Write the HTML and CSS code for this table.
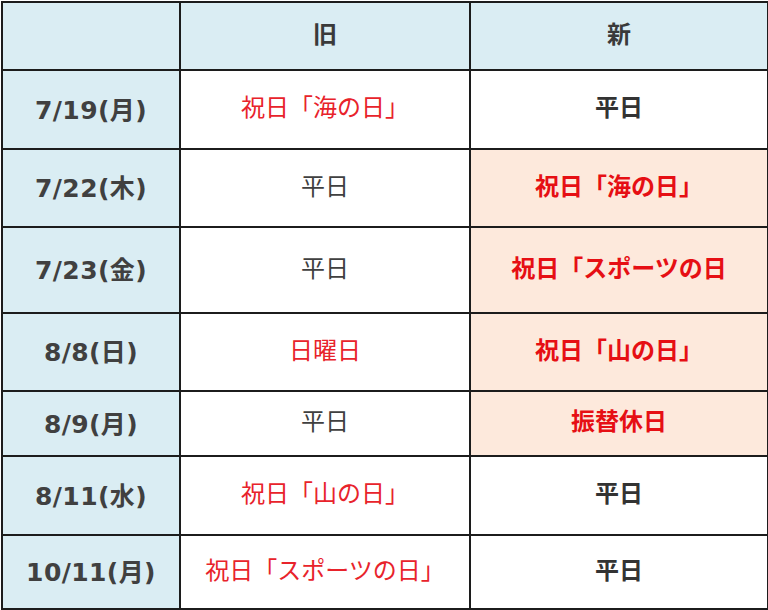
FILE: index.html
```html
<!DOCTYPE html>
<html lang="ja">
<head>
<meta charset="utf-8">
<title>祝日移動</title>
<link rel="stylesheet" href="styles.css">
</head>
<body>
<table class="holidays">
  <colgroup>
    <col class="c-date">
    <col class="c-old">
    <col class="c-new">
  </colgroup>
  <thead>
    <tr class="r-head">
      <th class="date"></th>
      <th class="head">旧</th>
      <th class="head">新</th>
    </tr>
  </thead>
  <tbody>
    <tr class="r1">
      <th class="date">7/19(月)</th>
      <td class="old red">祝日「海の日」</td>
      <td class="new">平日</td>
    </tr>
    <tr class="r2">
      <th class="date">7/22(木)</th>
      <td class="old">平日</td>
      <td class="new changed">祝日「海の日」</td>
    </tr>
    <tr class="r3">
      <th class="date">7/23(金)</th>
      <td class="old">平日</td>
      <td class="new changed">祝日「スポーツの日</td>
    </tr>
    <tr class="r4">
      <th class="date">8/8(日)</th>
      <td class="old red">日曜日</td>
      <td class="new changed">祝日「山の日」</td>
    </tr>
    <tr class="r5">
      <th class="date">8/9(月)</th>
      <td class="old">平日</td>
      <td class="new changed">振替休日</td>
    </tr>
    <tr class="r6">
      <th class="date">8/11(水)</th>
      <td class="old red">祝日「山の日」</td>
      <td class="new">平日</td>
    </tr>
    <tr class="r7">
      <th class="date">10/11(月)</th>
      <td class="old red">祝日「スポーツの日」</td>
      <td class="new">平日</td>
    </tr>
  </tbody>
</table>
</body>
</html>
```

FILE: styles.css
```css
html, body {
  margin: 0;
  padding: 0;
  background: #ffffff;
}

body {
  font-family: "DejaVu Sans", "Noto Sans CJK JP", sans-serif;
  color: #3a3a3a;
}

.holidays {
  border-collapse: collapse;
  table-layout: fixed;
  width: 766px;
  margin: 1px 0 0 1px;
}

.c-date { width: 178px; }
.c-old { width: 290px; }
.c-new { width: 298px; }

.holidays th,
.holidays td {
  border: 2px solid #1c1c1c;
  padding: 0 0 8px 0;
  text-align: center;
  vertical-align: middle;
  font-size: 24px;
  white-space: nowrap;
  overflow: hidden;
}

.r-head { height: 68px; }
.r1 { height: 79px; }
.r2 { height: 78px; }
.r3 { height: 86px; }
.r4 { height: 78px; }
.r5 { height: 65px; }
.r6 { height: 79px; }
.r7 { height: 74px; }

.head {
  background: #daedf3;
  font-weight: bold;
  font-size: 21px;
  color: #3a3a3a;
  font-family: "Noto Sans CJK JP", sans-serif;
}

.holidays .date {
  background: #daedf3;
  font-weight: bold;
  font-size: 25px;
  color: #404040;
  letter-spacing: 0.4px;
  padding-bottom: 4px;
}

.old {
  font-family: "Noto Sans CJK JP", sans-serif;
  font-weight: normal;
  color: #404040;
}

.old.red {
  color: #e8232b;
}

.new {
  font-family: "Noto Sans CJK JP", sans-serif;
  font-weight: bold;
  color: #333333;
}

.new.changed {
  background: #fde9dc;
  color: #e60f14;
}
```
